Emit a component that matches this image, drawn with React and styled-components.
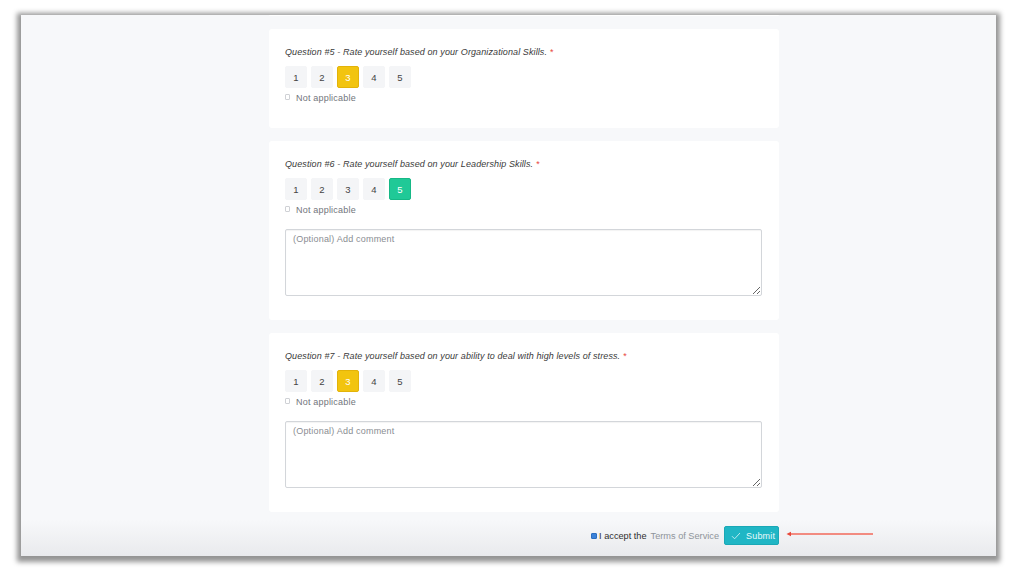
import React, { useState } from "react";
import styled, { createGlobalStyle } from "styled-components";

const GlobalStyle = createGlobalStyle`
  html, body {
    margin: 0;
    padding: 0;
    background: #fff;
  }
  body {
    font-family: "Liberation Sans", Arial, sans-serif;
    color: #333;
  }
`;

const Screen = styled.div`
  width: 1016px;
  height: 570px;
  box-sizing: border-box;
  padding: 15px 20px 14px 21px;
  overflow: hidden;
`;

const Frame = styled.div`
  height: 541px;
  background: linear-gradient(to bottom, #f7f8fa 0, #f7f8fa 505px, #e9eaed 541px);
  box-shadow: 0 2px 5px 4px rgba(0, 0, 0, 0.42);
  overflow: hidden;
`;

const Column = styled.div`
  width: 510px;
  margin-left: 248px;
  display: flex;
  flex-direction: column;
  gap: 13px;
`;

const CardStub = styled.div`
  height: 1px;
  background: #fff;
  border-radius: 0 0 2px 2px;
`;

const Card = styled.div`
  background: #fff;
  border-radius: 3px;
  padding: 17px 17px 24px 16px;
  display: flex;
  flex-direction: column;
`;

const QuestionTitle = styled.div`
  font-size: 9px;
  line-height: 12px;
  font-style: italic;
  letter-spacing: 0.1px;
  color: #3a3a3a;
`;

const Required = styled.span`
  color: #e8453c;
  font-style: normal;
  margin-left: 3px;
`;

const Scale = styled.div`
  display: flex;
  gap: 4px;
  margin-top: 8px;
`;

const ScaleButton = styled.button`
  width: 22px;
  height: 22px;
  padding: 0;
  box-sizing: border-box;
  border-radius: 2px;
  border: 1px solid ${(p) => (p.$active ? p.$border : "#f4f5f7")};
  background: ${(p) => (p.$active ? p.$color : "#f4f5f7")};
  color: ${(p) => (p.$active ? "#fff" : "#444")};
  font-family: "Liberation Sans", Arial, sans-serif;
  font-size: 9.5px;
  cursor: pointer;
`;

const NotApplicable = styled.label`
  display: flex;
  align-items: center;
  gap: 5px;
  margin-top: 4px;
  height: 12px;
  font-size: 9px;
  letter-spacing: 0.2px;
  color: #71757b;
`;

const TinyBox = styled.span`
  width: 3px;
  height: 4px;
  border: 1px solid #cfd1d5;
  border-radius: 1px;
  background: #fff;
  margin-top: -3px;
  margin-right: 1px;
`;

const Comment = styled.textarea`
  margin-top: 13px;
  height: 67px;
  box-sizing: border-box;
  border: 1px solid #d3d6da;
  border-radius: 2px;
  box-shadow: inset 0 1px 1px rgba(0, 0, 0, 0.05);
  padding: 4px 7px;
  font-family: "Liberation Sans", Arial, sans-serif;
  font-size: 9px;
  letter-spacing: 0.2px;
  resize: vertical;
  &::placeholder {
    color: #8a8d92;
  }
`;

const Footer = styled.div`
  position: relative;
  display: flex;
  justify-content: flex-end;
  align-items: center;
  gap: 5px;
  height: 19px;
  margin-top: 1px;
`;

const Accept = styled.label`
  display: flex;
  align-items: center;
  gap: 2px;
  font-size: 9.2px;
  color: #2e2e2e;
`;

const BlueBox = styled.span`
  width: 4px;
  height: 4px;
  background: #3b82d9;
  border: 1px solid #2c6ec0;
  border-radius: 1px;
`;

const TermsLink = styled.a`
  color: #8f949a;
  text-decoration: none;
  margin-left: 2px;
`;

const SubmitButton = styled.button`
  display: flex;
  align-items: center;
  gap: 5px;
  height: 19px;
  width: 55px;
  box-sizing: border-box;
  padding: 0 0 0 6px;
  border: 1px solid #1aa8b6;
  border-radius: 2px;
  background: #20b6c5;
  color: #e8fafc;
  font-family: "Liberation Sans", Arial, sans-serif;
  font-size: 9px;
  letter-spacing: 0.2px;
`;

const Annotation = styled.svg`
  position: absolute;
  left: calc(100% + 6px);
  top: 4px;
`;

const questions = [
  {
    n: 5,
    text: "Rate yourself based on your Organizational Skills.",
    value: 3,
    comment: false,
  },
  {
    n: 6,
    text: "Rate yourself based on your Leadership Skills.",
    value: 5,
    comment: true,
  },
  {
    n: 7,
    text: "Rate yourself based on your ability to deal with high levels of stress.",
    value: 3,
    comment: true,
  },
];

const palette = {
  3: { color: "#f2c40f", border: "#e3b309" },
  5: { color: "#20c997", border: "#16b886" },
};

const Question = ({ q }) => {
  const [value, setValue] = useState(q.value);
  const tone = palette[value] || palette[3];
  return (
    <Card>
      <QuestionTitle>
        Question #{q.n} - {q.text}
        <Required>*</Required>
      </QuestionTitle>
      <Scale>
        {[1, 2, 3, 4, 5].map((v) => (
          <ScaleButton
            key={v}
            $active={v === value}
            $color={tone.color}
            $border={tone.border}
            onClick={() => setValue(v)}
          >
            {v}
          </ScaleButton>
        ))}
      </Scale>
      <NotApplicable>
        <TinyBox />
        Not applicable
      </NotApplicable>
      {q.comment && <Comment placeholder="(Optional) Add comment" />}
    </Card>
  );
};

export default function App() {
  return (
    <>
      <GlobalStyle />
      <Screen>
        <Frame>
          <Column>
            <CardStub />
            {questions.map((q) => (
              <Question key={q.n} q={q} />
            ))}
            <Footer>
              <Accept>
                <BlueBox />
                I accept the
                <TermsLink href="#">Terms of Service</TermsLink>
              </Accept>
              <SubmitButton>
                <svg width="10" height="8" viewBox="0 0 10 8">
                  <path d="M1 4.2 L3.6 6.8 L9 1" fill="none" stroke="#cdeff3" strokeWidth="0.9" />
                </svg>
                Submit
              </SubmitButton>
              <Annotation width="90" height="8" viewBox="0 0 90 8">
                <line x1="4" y1="4" x2="88" y2="4" stroke="#f2685a" strokeWidth="1.3" />
                <path d="M1.5 4 L6 1.8 L6 6.2 Z" fill="#e8483a" />
              </Annotation>
            </Footer>
          </Column>
        </Frame>
      </Screen>
    </>
  );
}
